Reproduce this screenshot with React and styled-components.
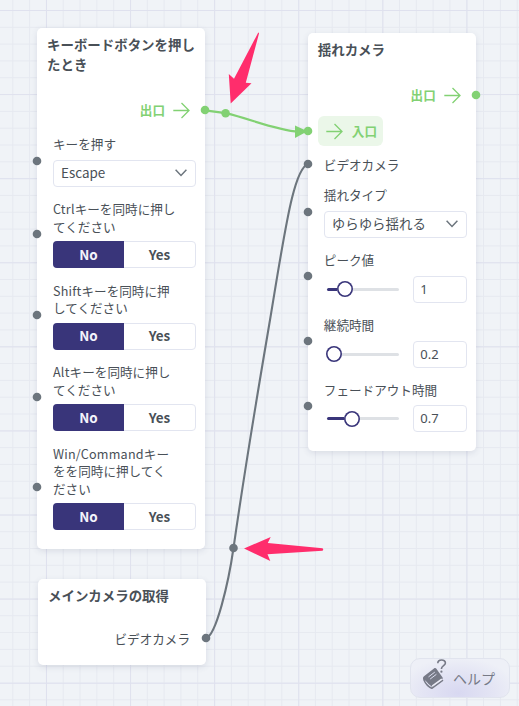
import React from "react";
import styled, { createGlobalStyle, css } from "styled-components";

const GREEN = "#82d173";
const GREY = "#6c757d";
const NAVY = "#39357a";
const LINE = "#e2e5f0";

const GlobalStyle = createGlobalStyle`
  * { box-sizing: border-box; }
  body {
    margin: 0;
    overflow: hidden;
    font-family: "Noto Sans CJK JP", sans-serif;
    color: #495057;
  }
`;

const gridLines = (dir, color) =>
  `linear-gradient(${dir}, ${color} 0 1.4px, transparent 1.4px)`;

const Canvas = styled.main`
  position: relative;
  width: 519px;
  height: 706px;
  overflow: hidden;
  background-color: #f0f3f7;
  background-image:
    ${gridLines("to right", "#dfe1ee")},
    ${gridLines("to bottom", "#dfe1ee")},
    ${gridLines("to right", "#e6e9f0")},
    ${gridLines("to bottom", "#e6e9f0")};
  background-size: 84.1px 84.1px, 84.1px 84.1px, 16.82px 16.82px, 16.82px 16.82px;
  background-position: 46px 0, 0 10px, 12.3px 0, 0 10px;
`;

const Node = styled.section`
  position: absolute;
  left: ${(p) => p.$x}px;
  top: ${(p) => p.$y}px;
  width: 168px;
  height: ${(p) => p.$h}px;
  display: flex;
  flex-direction: column;
  background: #fff;
  border-radius: 5px;
  box-shadow: 0 2px 6px rgba(60, 70, 110, 0.13);
`;

const Title = styled.h2`
  margin: 0;
  padding: 5.5px 0 1px 10px;
  font-size: 13.44px;
  line-height: 20px;
  font-weight: 700;
  white-space: nowrap;
`;

const Rows = styled.div`
  display: flex;
  flex-direction: column;
  margin-top: ${(p) => p.$top}px;
  gap: ${(p) => p.$gap}px;
`;

const Row = styled.div`
  position: relative;
  display: flex;
  flex-direction: column;
  padding: 0 9px 0 16px;
`;

const FlowRow = styled.div`
  position: relative;
  display: flex;
  align-items: center;
  height: 30px;
  margin-top: ${(p) => p.$top || 0}px;
  padding: ${(p) => (p.$out ? "0 15px 0 0" : "0 0 0 10px")};
  justify-content: ${(p) => (p.$out ? "flex-end" : "flex-start")};
  gap: 8px;
  font-size: 12.6px;
  line-height: 18px;
  color: ${GREEN};
  font-weight: 700;
`;

const Entry = styled.div`
  display: flex;
  align-items: center;
  gap: 9px;
  height: 30px;
  width: 65.5px;
  padding-left: 8px;
  border-radius: 6px;
  background: #ebf7e9;
`;

const DataRow = styled.div`
  position: relative;
  display: flex;
  align-items: center;
  height: 20px;
  margin-top: ${(p) => p.$top}px;
  padding: 0 16px;
  justify-content: ${(p) => (p.$out ? "flex-end" : "flex-start")};
  font-size: 12.6px;
  line-height: 18px;
`;

const PortDot = styled.svg`
  position: absolute;
  z-index: 2;
  width: 10px;
  height: 10px;
  fill: ${(p) => (p.$flow ? GREEN : GREY)};
  top: calc(50% - 5px + ${(p) => p.$dy || 0}px);
  ${(p) => (p.$out ? css`right: -5px;` : css`left: -5px;`)}
`;

const Port = (props) => (
  <PortDot viewBox="0 0 10 10" {...props}>
    <circle cx="5" cy="5" r="4.3" />
  </PortDot>
);

const Label = styled.div`
  font-size: 12.6px;
  line-height: 17.8px;
  margin-bottom: ${(p) => p.$space}px;
  white-space: nowrap;
`;

const Latin = styled.span`
  letter-spacing: 0.2px;
`;

const Select = styled.div`
  display: flex;
  align-items: center;
  justify-content: space-between;
  height: 27px;
  padding: 0 8px 2px 7px;
  border: 1px solid ${LINE};
  border-radius: 4px;
  font-size: 13.44px;
  line-height: 20px;

  svg {
    margin-top: 2px;
  }
`;

const Toggle = styled.div`
  display: flex;
  height: 27px;
  border: 1px solid ${LINE};
  border-radius: 4px;
`;

const Choice = styled.div`
  display: flex;
  align-items: center;
  justify-content: center;
  margin: -1px 0;
  padding-bottom: 2px;
  font-size: 13.44px;
  line-height: 20px;
  font-weight: 700;
  ${(p) =>
    p.$on
      ? css`
          width: 71px;
          margin-left: -1px;
          background: ${NAVY};
          color: #f3f3fb;
          border-radius: 4px 0 0 4px;
        `
      : css`
          flex: 1;
        `}
`;

const SliderLine = styled.div`
  display: flex;
  align-items: center;
  justify-content: space-between;
  height: 27px;
  padding-left: 3px;
`;

const Track = styled.div`
  position: relative;
  width: 72px;
  height: 3px;
  border-radius: 2px;
  background: linear-gradient(to right, ${NAVY} ${(p) => p.$v}px, #dee1e5 ${(p) => p.$v}px);
`;

const Thumb = styled.i`
  position: absolute;
  top: -6.5px;
  left: ${(p) => p.$v - 8}px;
  width: 16px;
  height: 16px;
  box-shadow: inset 0 0 0 1.6px ${NAVY};
  border-radius: 50%;
  background: #fff;
`;

const NumberBox = styled.div`
  width: 54px;
  height: 27px;
  padding-left: 6.5px;
  border: 1px solid ${LINE};
  border-radius: 4px;
  font-family: "Noto Sans", sans-serif;
  font-size: 13px;
  line-height: 24px;
`;

const Wires = styled.svg`
  position: absolute;
  inset: 0;
  z-index: 1;
  pointer-events: none;
`;

const Help = styled.button`
  position: absolute;
  left: 410px;
  top: 658px;
  width: 100px;
  height: 40px;
  display: flex;
  align-items: center;
  gap: 5px;
  padding: 0 0 0 11px;
  border: 1px solid #e1e4ee;
  border-radius: 10px;
  background: radial-gradient(ellipse 60px 36px at 48% 90%, #d8d8f1, #e4e5f4 60%, #eef0f7);
  font-family: inherit;
  font-size: 14px;
  line-height: 20px;
  color: #777a87;
`;

const Arrow = () => (
  <svg width="17" height="17" viewBox="0 0 17 17" fill="none" stroke={GREEN} strokeWidth="1.3">
    <path d="M0.3 8.5H16M8.5 1L16 8.5L8.5 16" />
  </svg>
);

const Chevron = () => (
  <svg width="12" height="8" viewBox="0 0 12 8" fill="none" stroke={GREY} strokeWidth="1.5">
    <path d="M0.6 0.8L6 6.4L11.4 0.8" />
  </svg>
);

const BookIcon = () => (
  <svg width="26" height="38" viewBox="0 0 26 38">
    <path
      d="M12.6 9.1Q13.6 8.7 14.2 9.5L20.6 18.5Q21 19.5 20.3 20.1L10 27.8Q6.5 25.5 5 23.3Q3.5 21.3 2.3 21.3Q0.4 20 1 18.8Q1.2 17.9 2 17.3Z"
      fill="#777a87"
    />
    <path d="M1.6 20.3Q4.5 27.3 9.8 29.3L21 21.1" fill="none" stroke="#777a87" strokeWidth="1.5" strokeLinejoin="round" />
    <path d="M10.2 27L19.8 20.2" stroke="#eeeef8" strokeWidth="1.5" />
    <path d="M6.5 17.9L12.8 13.1M8.2 20L14.4 15.3" stroke="#dcdef0" strokeWidth="1" />
    <path d="M15.8 4.3C15.8 0 23.5 0 23.4 4C23.3 6.7 19.4 6.6 19.4 9.9" fill="none" stroke="#777a87" strokeWidth="1.6" />
    <circle cx="19.4" cy="12.7" r="1.1" fill="#777a87" />
  </svg>
);

const Field = ({ lines, latin, dy, space = 5.4, children }) => (
  <Row>
    <Port $dy={dy} />
    <Label $space={space}>
      {lines.map((line, i) => (
        <div key={line}>
          {i === 0 && latin && <Latin>{latin}</Latin>}
          {line}
        </div>
      ))}
    </Label>
    {children}
  </Row>
);

const YesNo = () => (
  <Toggle>
    <Choice $on>No</Choice>
    <Choice>Yes</Choice>
  </Toggle>
);

const ToggleField = (props) => (
  <Field dy={-0.6} {...props}>
    <YesNo />
  </Field>
);

const SliderField = ({ label, offset, value }) => (
  <Field lines={[label]} space={7} dy={-0.3}>
    <SliderLine>
      <Track $v={offset}>
        <Thumb $v={offset} />
      </Track>
      <NumberBox>{value}</NumberBox>
    </SliderLine>
  </Field>
);

export default function App() {
  return (
    <Canvas>
      <GlobalStyle />
      <Node $x={37} $y={28.3} $h={521}>
        <Title>キーボードボタンを押し<br />たとき</Title>
        <FlowRow $out $top={20.5}>
          出口
          <Arrow />
          <Port $flow $out />
        </FlowRow>
        <Rows $top={10} $gap={13.5}>
          <Field lines={["キーを押す"]} space={6.6} dy={0}>
            <Select>Escape<Chevron /></Select>
          </Field>
          <ToggleField latin="Ctrl" lines={["キーを同時に押し", "てください"]} />
          <ToggleField latin="Shift" lines={["キーを同時に押", "してください"]} />
          <ToggleField latin="Alt" lines={["キーを同時に押し", "てください"]} />
          <ToggleField latin="Win/Command" lines={["キー", "をを同時に押してく", "ださい"]} />
        </Rows>
      </Node>

      <Node $x={307.8} $y={33.3} $h={417.7}>
        <Title>揺れカメラ</Title>
        <FlowRow $out $top={20.3}>
          出口
          <Arrow />
          <Port $flow $out />
        </FlowRow>
        <FlowRow $top={6}>
          <Port $flow />
          <Entry><Arrow />入口</Entry>
        </FlowRow>
        <DataRow $top={8.5}>
          <Port $dy={-0.8} />
          ビデオカメラ
        </DataRow>
        <Rows $top={11.4} $gap={13.1}>
          <Field lines={["揺れタイプ"]} space={7}>
            <Select>ゆらゆら揺れる<Chevron /></Select>
          </Field>
          <SliderField label="ピーク値" offset={18} value="1" />
          <SliderField label="継続時間" offset={7} value="0.2" />
          <SliderField label="フェードアウト時間" offset={25} value="0.7" />
        </Rows>
      </Node>

      <Node $x={38} $y={579} $h={86.3}>
        <Title>メインカメラの取得</Title>
        <DataRow $out $top={23}>
          ビデオカメラ
          <Port $out $dy={-0.8} />
        </DataRow>
      </Node>

      <Wires width="519" height="706" viewBox="0 0 519 706" fill="none">
        <path
          d="M206 638C216 636 228.5 583 233.5 548C247 454 261 373 270 320C278 272 285 226 292 198C296 182 302 166 308 164"
          stroke={GREY}
          strokeWidth="2.1"
        />
        <circle cx="233.5" cy="548" r="4.3" fill={GREY} />
        <path d="M205 110.3L225.6 113.2C251 119 275 130 299 131.8" stroke={GREEN} strokeWidth="2.3" />
        <circle cx="225.6" cy="113.2" r="4.3" fill={GREEN} />
        <path d="M295 125.5L307.5 131.3L295 138Z" fill={GREEN} />
        <path d="M230.7 103.5L228.8 74L234 78.8L258 33Q258.8 32 259 33.5L245.8 82.8L251.5 83.3Z" fill="#ff2d6c" />
        <path d="M244 548.4L270.7 537L267.8 543L322.5 548.2Q324 549.5 322.5 550.7L267.5 554.3L270.3 561Z" fill="#ff2d6c" />
      </Wires>

      <Help>
        <BookIcon />
        ヘルプ
      </Help>
    </Canvas>
  );
}
